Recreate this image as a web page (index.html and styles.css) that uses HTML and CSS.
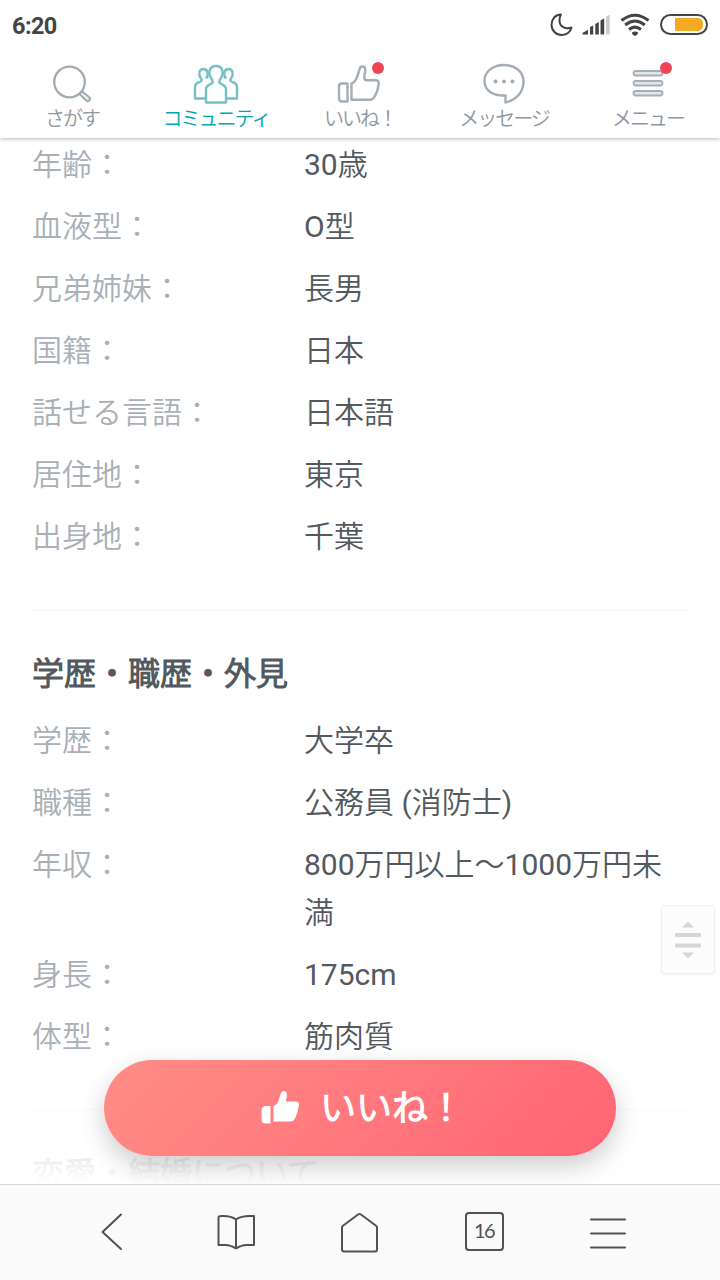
FILE: index.html
```html
<!DOCTYPE html>
<html lang="ja">
<head>
    <meta charset="UTF-8">
    <meta name="viewport" content="width=device-width, initial-scale=1.0">
    <title>プロフィール</title>
    <link rel="stylesheet" href="styles.css">
</head>
<body>
    <header class="header">
        <div class="status-bar">
            <span class="clock">6:20</span>
            <svg class="status-icons" width="160" height="26" viewBox="0 0 160 26" fill="none">
                <path d="M13 2.500C7.500 2.500 3.500 7 3.500 12.700 3.500 18.500 8 23 13.500 23c5 0 9-3 10-7.500C17.500 18 11.500 14.500 11.500 8.500c0-2.500.5-4.300 1.500-6z" stroke="#444" stroke-width="2" stroke-linejoin="round"/>
                <path d="M34.500 22.500v-1.500l5.500-3.300v4.800zM42 22.500v-7.500l3.200-1.500v9zM47.300 22.500v-10.500l3.500-2v12.500zM52.500 22.500v-14l3.700-2v16z" fill="#444"/>
                <path d="M58 22.500v-18l3.700-1.800v19.800z" fill="#ccc"/>
                <g stroke="#444" stroke-width="3">
                    <path d="M73.500 8.500q13.500-10.500 27 0M77.200 13q9.800-8 19.600 0M81 17.500q6-4.800 12 0"/>
                </g>
                <path d="M84 20.500q3-2 6 0c.3 1.500-1 2.500-3 3.500-2-1-3.300-2-3-3.500z" fill="#444"/>
                <rect x="113" y="3" width="46" height="19" rx="9.500" stroke="#444" stroke-width="2"/>
                <path d="M128 6h22q5 0 5 6.500t-5 6.500h-22q-1 0-1-1v-11q0-1 1-1z" fill="#f7a823"/>
            </svg>
        </div>
        <nav class="tabs">
            <a class="tab">
                <svg width="48" height="44" viewBox="0 0 48 44" fill="none" stroke="#a2abb2" stroke-width="2.300">
                    <circle cx="21.500" cy="22" r="15.300"/>
                    <path d="M31.500 34l2.500-2.800 7.500 6.300c1.700 1.700-1.100 4.700-3 3.200z" fill="#eef1f3" stroke-width="2" stroke-linejoin="round"/>
                </svg>
                <span>さがす</span>
            </a>
            <a class="tab active">
                <svg width="48" height="44" viewBox="0 0 48 44" fill="none" stroke="#74c0c4" stroke-width="2.400" stroke-linejoin="round">
                    <path d="M14 38.500h-11v-11c0-4 2.500-4.700 5.500-6q2-1 .5-3c-3-4-2-9.500 2.500-9.500s5.500 6 2.500 9.500"/>
                    <path d="M34 38.500h11v-11c0-4-2.500-4.700-5.500-6q-2-1-.5-3c3-4 2-9.500-2.500-9.500s-5.500 6-2.500 9.500"/>
                    <path d="M14 42.500v-13c0-4 2.500-4.500 5.500-6q2-1 .5-4c-4.500-6-3-13.500 4-13.500s8.500 7.500 4 13.500q-1.500 3 .5 4c3 1.500 5.500 2 5.500 6v13z"/>
                </svg>
                <span>コミュニティ</span>
            </a>
            <a class="tab">
                <svg width="48" height="44" viewBox="0 0 48 44" fill="none" stroke="#a5adb5" stroke-width="2.400" stroke-linejoin="round">
                    <path d="M6 23.500h5.500v18h-5.500q-3 0-3-3v-12q0-3 3-3z"/>
                    <path d="M15.500 23.500q3.500-1 5.500-6.500l3-9c.8-2.500 5-2 5.300 1.500.2 3-1 5-1 8 0 2 1 2.700 3 2.700h8q4 0 3.500 3.500-1 8-4.500 13.500-1.500 2.500-4.500 2.500h-18.300z"/>
                </svg>
                <i class="dot"></i>
                <span>いいね！</span>
            </a>
            <a class="tab">
                <svg width="48" height="44" viewBox="0 0 48 44" fill="none" stroke="#a5adb5" stroke-width="2.400" stroke-linejoin="round">
                    <path d="M24 5c11 0 19.500 6.500 19.500 16.500 0 11-7.500 18.500-18 21v-7c-12 .5-21-4.500-21-14.500 0-9.500 8.500-16 19.500-16z"/>
                    <g fill="#a5adb5" stroke="none">
                        <circle cx="15.500" cy="21.500" r="2"/>
                        <circle cx="24" cy="21.500" r="2"/>
                        <circle cx="32.500" cy="21.500" r="2"/>
                    </g>
                </svg>
                <span>メッセージ</span>
            </a>
            <a class="tab">
                <svg width="48" height="44" viewBox="0 0 48 44" fill="#e1e6e9" stroke="#a5adb5" stroke-width="1.800">
                    <rect x="9.500" y="11" width="29" height="4.500" rx="2.200"/>
                    <rect x="9.500" y="21" width="29" height="4.500" rx="2.200"/>
                    <rect x="9.500" y="31" width="29" height="4.500" rx="2.200"/>
                </svg>
                <i class="dot"></i>
                <span>メニュー</span>
            </a>
        </nav>
    </header>

    <main class="profile">
        <section>
            <dl>
                <dt>年齢：</dt><dd>30歳</dd>
                <dt>血液型：</dt><dd>O型</dd>
                <dt>兄弟姉妹：</dt><dd>長男</dd>
                <dt>国籍：</dt><dd>日本</dd>
                <dt>話せる言語：</dt><dd>日本語</dd>
                <dt>居住地：</dt><dd>東京</dd>
                <dt>出身地：</dt><dd>千葉</dd>
            </dl>
        </section>
        <section>
            <h2>学歴・職歴・外見</h2>
            <dl>
                <dt>学歴：</dt><dd>大学卒</dd>
                <dt>職種：</dt><dd>公務員 (消防士)</dd>
                <dt>年収：</dt><dd>800万円以上〜1000万円未満</dd>
                <dt>身長：</dt><dd>175cm</dd>
                <dt>体型：</dt><dd>筋肉質</dd>
            </dl>
        </section>
        <section>
            <h2>恋愛・結婚について</h2>
        </section>

        <div class="scroller">
            <svg width="26" height="38" viewBox="0 0 26 38" fill="#d6d6d6">
                <path d="M7 6.500l5-5q1-1 2 0l5 5zM7 31.500l5 5q1 1 2 0l5-5z"/>
                <rect y="12" width="26" height="4" rx="1"/>
                <rect y="22.500" width="26" height="4" rx="1"/>
            </svg>
        </div>

        <div class="action">
            <button type="button" class="like-button">
                <svg width="38" height="34" viewBox="0 0 38 34" fill="#fff">
                    <path d="M5 16h4.500v17.500h-4.500q-4.500 0-4.500-4.500v-8.500q0-4.500 4.500-4.500z"/>
                    <path d="M12.500 16q3.500-1 5-5.500l2.300-7c1-3.700 6-3.500 6.200 1 .1 2.500-1 4.500-1 7h9.500q3.800 0 3.400 3.500-.7 7-3.700 13-1.700 3.500-5 3.500h-16.700z"/>
                </svg>
                <span>いいね！</span>
            </button>
        </div>
    </main>

    <footer class="toolbar">
        <svg width="40" height="44" viewBox="0 0 40 44"><path d="M30 4.500l-18.500 17.500 18.500 17"/></svg>
        <svg width="40" height="44" viewBox="0 0 40 44"><path d="M20 9.500q-5-4-15-3.500-2.500 0-2.500 1.500v27.500h7q5 0 10.500 3.500 5.500-3.500 10.500-3.500h7.500v-29h-4q-9 0-14 3.500zM20 9.500v29"/></svg>
        <svg width="40" height="44" viewBox="0 0 40 44"><path d="M2 17.500q0-1 1-1.800l15-11.200q1.500-1 3 0l15 11.200q1 .8 1 1.800v22q0 2-2 2h-31q-2 0-2-2z"/></svg>
        <div class="page-count">16</div>
        <svg width="40" height="44" viewBox="0 0 40 44"><path d="M3 9.500h34M3 23.500h34M3 37.500h34"/></svg>
    </footer>
</body>
</html>
```
FILE: styles.css
```css
* {
    box-sizing: border-box;
}

body {
    display: flex;
    flex-direction: column;
    width: 720px;
    height: 1280px;
    margin: 0;
    overflow: hidden;
    background-color: #fff;
    color: #53595e;
    font-family: Roboto, 'Noto Sans CJK JP DemiLight', 'Noto Sans CJK JP', sans-serif;
}

.header {
    position: relative;
    z-index: 2;
    height: 138px;
    background-color: #fff;
    box-shadow: 0 1px 4px rgba(0, 0, 0, 0.3);
}

.status-bar {
    display: flex;
    justify-content: space-between;
    height: 50px;
    padding: 12px 12px 0 12px;
}

.clock {
    color: #444;
    font-size: 23.5px;
    font-weight: bold;
    line-height: 28px;
    letter-spacing: -0.6px;
}

.tabs {
    display: flex;
}

.tab {
    position: relative;
    flex: 1;
    display: flex;
    flex-direction: column;
    align-items: center;
    padding-top: 10px;
    color: #8f979e;
    font-size: 20px;
    line-height: 30px;
    letter-spacing: -2px;
    white-space: nowrap;
}

.tab.active {
    color: #00a6ae;
}

.dot {
    position: absolute;
    top: 12px;
    left: 84px;
    width: 12px;
    height: 12px;
    border-radius: 50%;
    background-color: #ef4656;
}

.profile {
    position: relative;
    flex: 1;
    min-height: 0;
    padding: 3px 32px 0;
    overflow: hidden;
}

section {
    height: 470px;
    border-bottom: 2px solid #f8f8f8;
}

section + section {
    height: 500px;
    padding-top: 39px;
}

h2 {
    margin: 0 0 19px;
    font-size: 32px;
    line-height: 48px;
}

dl {
    display: grid;
    grid-template-columns: 272px 1fr;
    row-gap: 14px;
    margin: 0;
    font-size: 30px;
    line-height: 48px;
}

dt {
    color: #a9b0b6;
}

dd {
    margin: 0;
}

.scroller {
    position: absolute;
    top: 767px;
    right: 5px;
    display: flex;
    align-items: center;
    justify-content: center;
    width: 54px;
    height: 69px;
    border: 1px solid #f0f0f0;
    border-radius: 3px;
    background-color: #fcfcfc;
    box-shadow: 0 1px 2px rgba(0, 0, 0, 0.05);
}

/* fades the page out under the button */
.action {
    position: absolute;
    left: 0;
    right: 0;
    bottom: 0;
    display: flex;
    justify-content: center;
    height: 156px;
    padding-top: 32px;
    background: linear-gradient(rgba(255, 255, 255, 0) 10%, rgba(255, 255, 255, 0.86) 78%, #fff);
}

.like-button {
    display: flex;
    align-items: center;
    justify-content: center;
    gap: 21px;
    width: 512px;
    height: 96px;
    padding: 0 0 2px 5px;
    border: none;
    border-radius: 48px;
    background: linear-gradient(135deg, #ff8d86, #ff6474);
    box-shadow: 0 10px 26px rgba(0, 0, 0, 0.2);
    color: #fff;
    font-family: inherit;
    font-size: 36px;
    font-weight: bold;
}

.like-button span {
    padding-bottom: 4px;
}

.toolbar {
    position: relative;
    display: flex;
    justify-content: space-between;
    height: 96px;
    padding: 25px 92px 0 91px;
    border-top: 1px solid #d9d9d9;
    background-color: #fafafa;
}

.toolbar svg {
    fill: none;
    stroke: #555051;
    stroke-width: 2;
    stroke-linecap: round;
    stroke-linejoin: round;
}

.page-count {
    width: 39px;
    height: 39px;
    margin-top: 2px;
    border: 2px solid #555051;
    border-radius: 4px;
    color: #555051;
    font-family: Lato, sans-serif;
    font-size: 20px;
    line-height: 33px;
    letter-spacing: -1.5px;
    text-align: center;
}
```
